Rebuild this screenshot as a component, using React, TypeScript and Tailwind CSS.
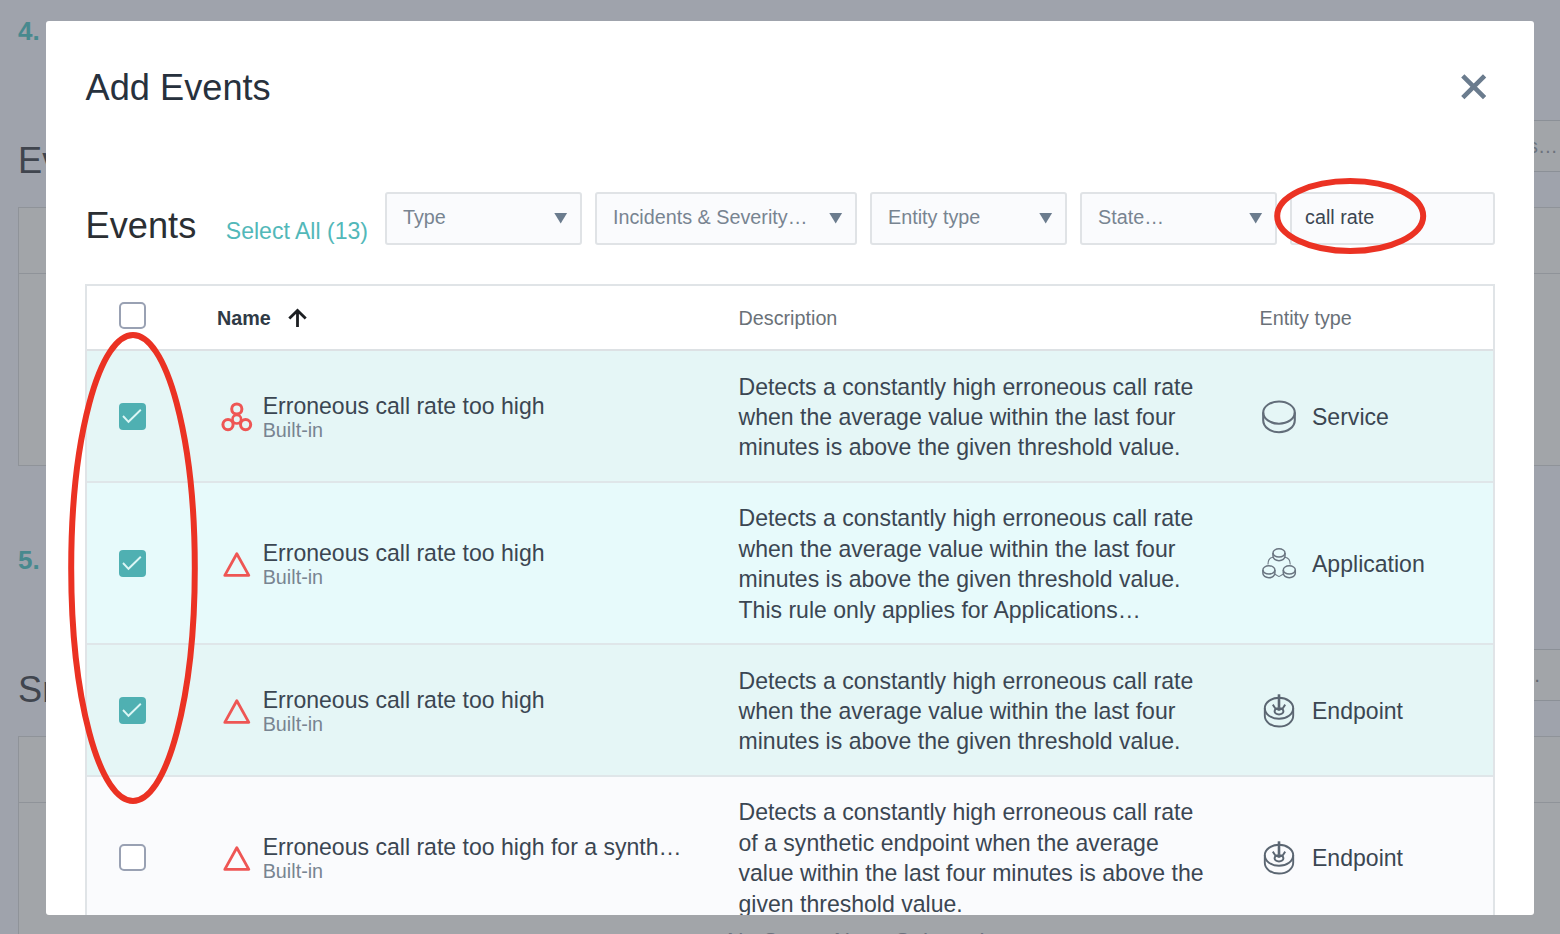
import React from 'react';

function Caret() {
  return (
    <svg className="shrink-0" width="14" height="12" viewBox="0 0 14 12">
      <path d="M0.3 1h12.8L6.7 11.6z" fill="#6b7c8e" />
    </svg>
  );
}

function Filter({ label, className }: { label: string; className: string }) {
  return (
    <div
      className={`flex h-[53px] items-center justify-between rounded-[3px] border-2 border-[#e0e3e6] bg-[#fafbfd] pr-[12px] pb-px pl-4 text-[19.77px] leading-[46px] whitespace-nowrap text-[#788491] ${className}`}
    >
      <span className="pb-[2px]">{label}</span>
      <Caret />
    </div>
  );
}

function Checkbox({ checked }: { checked: boolean }) {
  if (!checked) {
    return <span className="block size-[27px] rounded-[5px] border-2 border-[#99a1b3] bg-white" />;
  }
  return (
    <span className="block size-[27px] rounded-[4px] bg-[#4fb0b2]">
      <svg width="27" height="27" viewBox="0 0 27 27" fill="none">
        <path d="M4 13l5.5 5.8L21.8 6.8" stroke="#dcf6f5" strokeWidth="1.9" />
      </svg>
    </span>
  );
}

type Kind = 'service' | 'application' | 'endpoint';

function ClusterIcon() {
  return (
    <svg width="32" height="32" viewBox="0 0 32 32" fill="none" stroke="#ee5654" strokeWidth="3">
      <circle cx="15.8" cy="8" r="5.1" />
      <circle cx="7" cy="23.6" r="5.1" />
      <circle cx="24.6" cy="23.6" r="5.1" />
      <circle cx="15.8" cy="18.2" r="4.3" strokeWidth="2.6" />
    </svg>
  );
}

function TriangleIcon() {
  return (
    <svg width="32" height="32" viewBox="0 0 32 32" fill="none" stroke="#ee5654" strokeWidth="2.8" strokeLinejoin="round">
      <path d="M15.8 5.8L27.8 27.400H3.8z" />
    </svg>
  );
}

function MiniService({ x, y }: { x: number; y: number }) {
  return (
    <g transform={`translate(${x} ${y})`}>
      <ellipse cx="0" cy="-1.8" rx="6" ry="4.1" />
      <path d="M-6-1.8V1.6C-6 4-3.4 6 0 6S6 4 6 1.6V-1.8" />
    </g>
  );
}

function EntityIcon({ kind }: { kind: Kind }) {
  if (kind === 'service') {
    return (
      <svg width="36" height="36" viewBox="0 0 36 36" fill="none" stroke="#626d79" strokeWidth="2.1">
        <ellipse cx="18" cy="13.6" rx="15.8" ry="11.1" />
        <path d="M2.2 13.6v7.6c0 6.6 7 12 15.8 12s15.8-5.4 15.8-12v-7.6" />
      </svg>
    );
  }
  if (kind === 'application') {
    return (
      <svg width="36" height="36" viewBox="0 0 36 36" fill="none" stroke="#6a7581" strokeWidth="1.5">
        <MiniService x={18} y={8.7} />
        <MiniService x={7.9} y={25.7} />
        <MiniService x={28.3} y={25.7} />
        <path
          d="M12 11.2c-3.6.6-5.1 3-5 7.4M24 11.2c3.6.6 5.3 3 5.2 7.4M13.8 28.6c1.6-.4 2.4 1.8 4.2 1.8s2.6-2.2 4.3-1.8"
          strokeWidth="1.1"
        />
      </svg>
    );
  }
  return (
    <svg width="36" height="36" viewBox="0 0 36 36" fill="none" stroke="#5b6672" strokeWidth="1.9">
      <ellipse cx="18" cy="15.3" rx="14.2" ry="10.5" />
      <path d="M3.8 15.3v7.5c0 6 6.2 10.7 14.2 10.7s14.2-4.7 14.2-10.7v-7.5" />
      <path d="M18 1.3v13.5" strokeWidth="2.6" />
      <path d="M11.8 11.6l2.4 3.6 3.8 1.8 3.8-1.8 2.4-3.6" strokeWidth="1.9" />
      <ellipse cx="18" cy="18.300" rx="4.400" ry="3.100" strokeWidth="2" />
    </svg>
  );
}

type Row = {
  name: string;
  icon: 'cluster' | 'triangle';
  checked: boolean;
  bg: string;
  lines: string[];
  kind: Kind;
  entity: string;
};

const rows: Row[] = [
  {
    name: 'Erroneous call rate too high',
    icon: 'cluster',
    checked: true,
    bg: 'h-[131.5px] bg-[#e5f6f6]',
    lines: [
      'Detects a constantly high erroneous call rate',
      'when the average value within the last four',
      'minutes is above the given threshold value.',
    ],
    kind: 'service',
    entity: 'Service',
  },
  {
    name: 'Erroneous call rate too high',
    icon: 'triangle',
    checked: true,
    bg: 'h-[162.5px] bg-[#e7fafb]',
    lines: [
      'Detects a constantly high erroneous call rate',
      'when the average value within the last four',
      'minutes is above the given threshold value.',
      'This rule only applies for Applications…',
    ],
    kind: 'application',
    entity: 'Application',
  },
  {
    name: 'Erroneous call rate too high',
    icon: 'triangle',
    checked: true,
    bg: 'h-[131.5px] bg-[#e5f6f6]',
    lines: [
      'Detects a constantly high erroneous call rate',
      'when the average value within the last four',
      'minutes is above the given threshold value.',
    ],
    kind: 'endpoint',
    entity: 'Endpoint',
  },
  {
    name: 'Erroneous call rate too high for a synth…',
    icon: 'triangle',
    checked: false,
    bg: 'h-[162.5px] bg-[#fafbfd]',
    lines: [
      'Detects a constantly high erroneous call rate',
      'of a synthetic endpoint when the average',
      'value within the last four minutes is above the',
      'given threshold value.',
    ],
    kind: 'endpoint',
    entity: 'Endpoint',
  },
];

const columns = 'grid grid-cols-[130px_521.5px_521px_1fr]';

function EventRow({ row }: { row: Row }) {
  return (
    <div
      className={`${columns} shrink-0 items-center border-b-2 border-[#dfe6e9] pt-[3px] text-[23.06px] whitespace-nowrap text-[#3b4652] ${row.bg}`}
    >
      <div className="pb-px pl-8">
        <Checkbox checked={row.checked} />
      </div>
      <div className="flex items-center pl-1">
        {row.icon === 'cluster' ? <ClusterIcon /> : <TriangleIcon />}
        <div className="pb-px pl-[9.7px]">
          <div className="leading-[26px]">{row.name}</div>
          <div className="text-[19.77px] leading-[22px] text-[#788491]">Built-in</div>
        </div>
      </div>
      <div className="leading-[30.46px]">
        {row.lines.map((line) => (
          <div key={line}>{line}</div>
        ))}
      </div>
      <div className="flex items-center gap-[15px] pl-[1.5px]">
        <EntityIcon kind={row.kind} />
        <span className="pt-px">{row.entity}</span>
      </div>
    </div>
  );
}

function PageSection({ step, title, empty }: { step: string; title: string; empty?: string }) {
  return (
    <section className="flex h-[529.3px] shrink-0 flex-col pt-[11px]">
      <div className="h-[109px] text-[26px] leading-10 font-bold text-[#48898e]">{step}</div>
      <div className="flex h-[52px] justify-between">
        <div className="pt-[20.5px] text-[36.2px] leading-10 text-[#40454e]">{title}</div>
        <div className="w-[262px] border border-[#8b9097] bg-[#a2a5a9]" />
      </div>
      <div className="mt-[35px] flex h-[259px] flex-col border border-[#8f9399] bg-[#a2a5a9]">
        <div className="h-[66px] shrink-0 border-b border-[#8f9399]" />
        <div className="pt-[124px] pl-[708px] text-[23.06px] leading-[30px] text-[#6c727d]">{empty}</div>
      </div>
    </section>
  );
}

export default function App() {
  return (
    <div className="relative h-[934px] w-[1560px] overflow-hidden bg-[#9fa3ac] font-['Liberation_Sans',Arial,sans-serif]">
      <div className="flex w-[1640px] flex-col pl-[18px]">
        <PageSection step="4." title="Events" />
        <PageSection step="5." title="Smart Alerts" empty="No Smart Alerts Selected" />
      </div>
      <span className="absolute top-[133px] left-[1528px] text-[19.77px] leading-[26px] text-[#6c727c]">s…</span>
      <span className="absolute top-[662px] left-[1521px] text-[19.77px] leading-[26px] text-[#60656e]">…</span>

      <div className="absolute top-[21px] left-[46px] flex h-[894px] w-[1488px] flex-col overflow-hidden rounded-[3px] bg-white px-[39px]">
        <header className="flex h-[171px] shrink-0 items-start justify-between pt-[47px]">
          <h1 className="pl-[0.6px] text-[36.2px] leading-10 text-[#27313d]">Add Events</h1>
          <svg className="mt-[6px] mr-[8px]" width="26" height="26" viewBox="0 0 26 26">
            <path d="M1.8 1.8l21.8 21.8M23.6 1.8L1.8 23.6" stroke="#6b7c8e" strokeWidth="4.6" />
          </svg>
        </header>

        <div className="flex h-[92px] shrink-0 items-start">
          <h2 className="mt-[14px] w-[140px] pl-[0.6px] text-[36.2px] leading-10 text-[#2b2f33]">Events</h2>
          <span className="mt-6 w-[160px] pl-[0.8px] text-[23.06px] leading-[30px] text-[#52b8b9]">Select All (13)</span>
          <Filter label="Type" className="w-[197px]" />
          <Filter label="Incidents & Severity…" className="ml-[13px] w-[262px]" />
          <Filter label="Entity type" className="ml-[13px] w-[197px]" />
          <Filter label="State…" className="ml-[13px] w-[197px]" />
          <div className="ml-[13px] h-[53px] w-[205px] rounded-[3px] border-2 border-[#e0e3e6] bg-[#fafbfd] pl-[13px] text-[19.77px] leading-[47px] text-[#3b4652]">
            call rate
          </div>
        </div>

        <div className="flex shrink-0 flex-col border-2 border-[#e0e4e7]">
          <div
            className={`${columns} h-[65px] shrink-0 items-center border-b-2 border-[#dde1e4] pt-[2px] text-[19.77px] whitespace-nowrap text-[#6a7178]`}
          >
            <div className="pb-[6px] pl-8">
              <Checkbox checked={false} />
            </div>
            <div className="flex items-center gap-[17px] font-bold text-[#2f3a46]">
              Name
              <svg width="20" height="20" viewBox="0 0 20 20" fill="none" stroke="#1c1f22" strokeWidth="2.8">
                <path d="M9.500 19V2.8M1.300 10.6L9.500 2.4l8.200 8.200" />
              </svg>
            </div>
            <div>Description</div>
            <div>Entity type</div>
          </div>
          {rows.map((row, index) => (
            <EventRow key={index} row={row} />
          ))}
        </div>
      </div>

      <svg className="pointer-events-none absolute inset-0" width="1560" height="934" fill="none" stroke="#eb3223" strokeWidth="6">
        <ellipse cx="133" cy="568" rx="61.8" ry="233" />
        <ellipse cx="1350.2" cy="216" rx="73" ry="35" />
      </svg>
    </div>
  );
}
